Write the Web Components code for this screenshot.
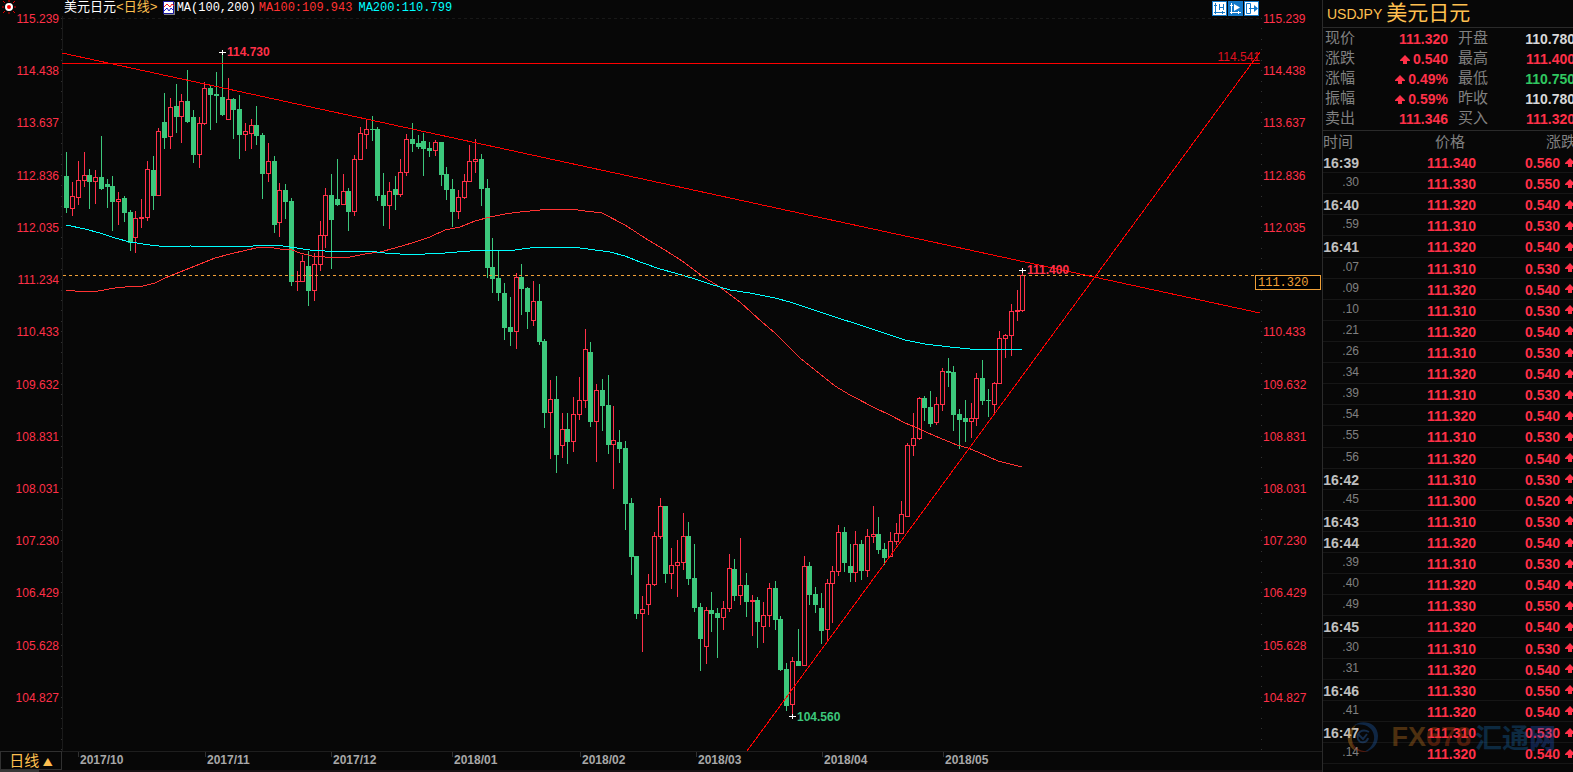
<!DOCTYPE html>
<html lang="zh-CN">
<head>
<meta charset="utf-8">
<title>USDJPY 美元日元</title>
<style>
  :root {
    --bg: #070707;
    --line: #1e1e1e;
    --up: #ff3048;
    --down: #3cc87c;
    --gold: #ffc050;
    --muted: #808080;
    --orange: #f0a038;
    --cjk: "Noto Sans CJK SC";
  }
  html, body {
    height: 100%;
    margin: 0;
    overflow: hidden;
    background: var(--bg);
  }
  body {
    font-family: "Liberation Sans", var(--cjk), sans-serif;
    font-size: 12px;
  }
</style>
</head>
<body>
<trading-screen>
  <chart-panel slot="chart"></chart-panel>
  <quote-header slot="side" code="USDJPY">美元日元</quote-header>
  <tick-list slot="side"></tick-list>
</trading-screen>

<script>
const MIN_LEFT = 62, MIN_TOP = 16, PLOT_W = 1198, PLOT_H = 735;

const PRICES = ['115.239', '114.438', '113.637', '112.836', '112.035', '111.234', '110.433',
  '109.632', '108.831', '108.031', '107.230', '106.429', '105.628', '104.827'];

// direction, high, body top, body bottom, low
const CANDLES = `
D 152 176 208 213|U 182 196 209 216|U 161 180 198 205|U 152 175 181 187|D 169 175 182 209
U 170 177 182 204|D 136 177 189 190|D 179 184 187 208|D 176 186 202 231|U 192 199 202 225
D 196 198 213 222|D 210 212 243 251|U 211 218 238 253|U 199 217 219 228|U 161 169 218 221
D 156 170 196 210|U 128 131 196 196|D 93 122 138 149|U 98 107 137 149|D 84 106 117 133
U 94 101 117 143|D 70 101 122 123|D 110 117 155 163|U 117 123 155 168|U 82 88 124 125
D 86 88 95 130|D 72 94 96 123|D 53 97 115 116|U 78 99 120 120|D 98 99 110 139
D 95 109 135 159|U 123 131 135 151|U 119 125 134 149|D 106 125 136 145|D 133 135 174 199
U 143 161 174 182|D 156 161 225 233|U 183 190 223 237|D 184 190 202 219|D 198 201 282 286
U 271 281 282 291|U 255 261 282 282|D 251 266 291 306|U 253 264 291 301|U 221 235 265 271
U 188 195 236 248|D 174 195 220 269|D 159 199 205 206|U 174 191 205 205|D 188 191 212 231
U 155 159 212 216|U 127 133 160 160|U 120 129 135 149|D 116 129 130 141|D 127 129 196 201
D 173 195 206 226|U 182 191 206 229|D 176 189 195 210|U 159 172 195 197|U 134 139 173 176
D 123 139 144 152|D 135 143 147 149|D 133 141 149 176|D 142 148 151 157|U 140 142 151 156
D 142 142 175 186|D 167 174 190 200|D 179 189 212 227|U 190 197 212 219|U 174 181 198 199
U 145 161 182 182|U 139 159 162 173|D 154 159 189 206|D 179 188 268 278|D 238 267 279 293
D 250 278 293 301|D 283 293 328 340|D 297 327 332 346|U 273 277 332 349|D 264 277 289 315
D 287 288 312 329|U 281 301 321 326|D 284 301 342 345|D 339 341 413 428|U 380 399 413 459
D 376 399 455 473|U 413 429 446 458|D 413 429 442 464|U 397 414 442 452|U 377 400 415 420
U 329 349 401 408|D 342 352 422 427|U 384 390 422 462|D 379 390 406 431|D 375 405 445 454
U 406 440 445 489|D 430 442 449 463|D 441 448 504 530|D 498 503 557 575|D 556 556 614 619
U 596 609 614 652|U 574 584 605 615|U 532 536 585 586|U 498 506 537 539|D 506 506 574 583
U 548 565 574 589|U 540 562 566 597|U 513 536 563 570|D 522 536 579 585|D 544 578 608 612
D 603 607 639 671|U 607 610 647 664|D 592 610 614 632|D 608 613 618 658|U 601 608 618 630
U 554 568 609 612|D 559 569 596 601|U 538 585 596 605|D 573 585 602 617|U 595 600 602 636
D 597 600 622 648|U 602 615 627 643|U 583 588 616 627|D 581 588 620 630|D 616 619 670 671
D 663 669 706 711|U 657 661 705 715|D 629 661 666 666|U 556 566 666 666|D 562 566 595 605
D 587 594 605 613|D 593 608 631 644|U 579 583 630 641|U 566 571 584 623|U 525 532 572 576
D 527 532 563 572|D 544 566 573 582|U 531 544 573 582|D 540 544 571 580|U 529 536 571 577
U 506 534 537 543|D 517 534 550 554|D 543 549 558 565|U 532 541 557 557|U 523 533 542 545
U 501 514 534 534|U 443 445 517 517|U 413 438 446 456|U 397 398 439 440|D 396 398 408 421
D 391 407 424 427|U 397 404 423 425|U 368 371 405 411|D 358 371 373 387|D 366 372 415 431
D 409 414 420 449|D 400 418 422 442|U 403 418 422 438|U 373 378 419 426|D 360 378 401 405
D 389 400 401 417|U 382 383 405 413|U 331 338 384 384|U 334 335 339 358|U 304 311 336 356
U 290 310 312 321|U 271 275 311 312`.trim().split(/[|\n]/).map(c => c.split(' '));

const MA100 = `66,290 75,291 90,292 98,291 115,288 125,287 143,286 155,283 165,278 175,274 190,268
  200,264 215,258 230,254 247,250 256,248 267,247 280,249 292,250 300,253 312,256 325,257 337,258
  350,257 365,254 380,252 395,248 412,243 430,237 445,230 460,227 475,221 490,217 505,214 520,212
  540,210 560,209 570,209 585,211 602,213 625,225 648,240 665,250 682,261 705,278 720,287 740,302
  762,322 775,333 785,343 800,358 815,370 835,386 850,395 875,408 890,415 905,423 915,427 935,436
  957,445 968,448 980,453 998,461 1010,464 1022,467`;
const MA200 = `66,225 85,229 100,233 115,238 130,242 150,245 167,247 190,246 245,247 262,245 275,245
  290,247 310,250 325,251 368,251 385,253 400,254 425,254 445,253 470,251 480,250 515,250 530,248
  548,247 562,247 580,248 595,250 610,252 625,256 640,262 660,269 675,273 695,279 710,284 730,290
  750,293 775,298 790,302 808,308 835,317 860,325 890,335 905,340 925,344 950,347 970,349 1022,349`;

const TICKS = `16:39 .340 .560|.30 .330 .550|16:40 .320 .540|.59 .310 .530|16:41 .320 .540|.07 .310 .530
.09 .320 .540|.10 .310 .530|.21 .320 .540|.26 .310 .530|.34 .320 .540|.39 .310 .530|.54 .320 .540
.55 .310 .530|.56 .320 .540|16:42 .310 .530|.45 .300 .520|16:43 .310 .530|16:44 .320 .540
.39 .310 .530|.40 .320 .540|.49 .330 .550|16:45 .320 .540|.30 .310 .530|.31 .320 .540
16:46 .330 .550|.41 .320 .540|16:47 .310 .530|.14 .320 .540`.split(/[|\n]/).map(t => t.split(' '));

class TradingScreen extends HTMLElement {
  constructor() {
    super();
    this.attachShadow({ mode: 'open' }).innerHTML = `
      <style>
        :host { display: flex; height: 100vh; background: var(--bg); }
        main { flex: 1; min-width: 0; display: flex; }
        aside {
          position: relative;
          flex: none;
          width: 250px;
          display: flex;
          flex-direction: column;
          border-left: 1px solid #2a2a2a;
          overflow: hidden;
        }
      </style>
      <main><slot name="chart"></slot></main>
      <aside>
        <slot name="side"></slot>
        <site-mark></site-mark>
      </aside>`;
  }
}

class PriceAxis extends HTMLElement {
  connectedCallback() {
    const skip = this.getAttribute('skip');
    this.attachShadow({ mode: 'open' }).innerHTML = `
      <style>
        :host {
          position: relative;
          display: flex;
          flex-direction: column;
          box-sizing: border-box;
          padding: 12px 3px 8px;
          color: var(--up);
          text-align: var(--axis-align, left);
        }
        .label { flex: 1; line-height: 14px; }
        .dots {
          position: absolute;
          top: 18px;
          bottom: 0;
          left: var(--dots-left, auto);
          right: var(--dots-right, auto);
          width: 1px;
          background: repeating-linear-gradient(#303030 0 1px, transparent 1px 1.425%);
        }
      </style>
      ${PRICES.map(p => `<span class="label">${p === skip ? '' : p}</span>`).join('')}
      <i class="dots"></i>
      <slot></slot>`;
  }
}
customElements.define('price-axis', PriceAxis);

class CandlePlot extends HTMLElement {
  constructor() {
    super();
    this.attachShadow({ mode: 'open' });
  }

  connectedCallback() {
    const candles = CANDLES.map(([dir, ...v], i) => {
      const [high, top, bottom, low] = v.map(Number);
      const x = Math.floor(66.75 + i * 5.76);
      const h = Math.max(bottom - top, 1);
      if (dir === 'D') {
        return `<path fill="#3cc87c" d="M${x} ${high}h1V${low}h-1zM${x - 2} ${top}h5v${h}h-5z"/>`;
      }
      const body = h < 3
        ? `<path fill="#ff3048" d="M${x - 2} ${top}h5v${h}h-5z"/>`
        : `<path fill="none" stroke="#ff3048" d="M${x - 1.5} ${top + 0.5}h4v${h - 1}h-4z"/>`;
      return `<path fill="#ff3048" d="M${x} ${high}h1V${top}h-1zM${x} ${bottom}h1V${low}h-1z"/>${body}`;
    }).join('');

    const cross = (x, y) => `<path fill="#fff" d="M${x - 3} ${y}h7v1h-7zM${x} ${y - 2}h1v5h-1z"/>`;
    const left = x => `left:${(x - MIN_LEFT) / PLOT_W * 100}%`;
    const top = y => `top:${(y - MIN_TOP) / PLOT_H * 100}%`;

    this.shadowRoot.innerHTML = `
      <style>
        :host { position: relative; display: block; min-height: 0; }
        svg { position: absolute; inset: 0; width: 100%; height: 100%; shape-rendering: crispEdges; }
        polyline, line { fill: none; stroke-width: 1; vector-effect: non-scaling-stroke; }
        .tag {
          position: absolute;
          line-height: 14px;
          margin-top: -7px;
          font-weight: bold;
          color: var(--up);
          white-space: nowrap;
        }
        .low { color: var(--down); }
        .level { right: 0; font-weight: normal; color: #e01020; }
      </style>
      <svg viewBox="${MIN_LEFT} ${MIN_TOP} ${PLOT_W} ${PLOT_H}" preserveAspectRatio="none">
        <line x1="62" y1="18.5" x2="1260" y2="18.5" stroke="#181818" stroke-dasharray="3 3"/>
        <line x1="62.5" y1="16" x2="62.5" y2="751" stroke="#1a1a1a"/>
        ${candles}
        <polyline points="${MA100}" stroke="#ff3232"/>
        <polyline points="${MA200}" stroke="#00ffff"/>
        <line x1="63" y1="275.5" x2="1255" y2="275.5" stroke="#f0a038" stroke-dasharray="3 3"/>
        <line x1="62" y1="63.5" x2="1260" y2="63.5" stroke="#ff0000"/>
        <line x1="62" y1="53" x2="1260" y2="313" stroke="#ff0000"/>
        <line x1="747" y1="751" x2="1260" y2="52" stroke="#ff0000"/>
        ${cross(222, 52)}${cross(1022, 270)}${cross(792, 716)}
      </svg>
      <span class="tag" style="${left(227)};${top(52)}">114.730</span>
      <span class="tag" style="${left(1027)};${top(270)}">111.400</span>
      <span class="tag low" style="${left(797)};${top(717)}">104.560</span>
      <span class="tag level" style="${top(57)}">114.541</span>`;
  }
}
customElements.define('candle-plot', CandlePlot);

class ChartToolbar extends HTMLElement {
  constructor() {
    super();
    this.attachShadow({ mode: 'open' }).innerHTML = `
      <style>
        :host {
          display: flex;
          align-items: center;
          height: 16px;
          padding-left: 2px;
          white-space: nowrap;
          font-family: "Liberation Mono", var(--cjk), monospace;
          line-height: 16px;
          color: #fff;
        }
        .name { font-size: 13px; margin-right: 5px; }
        .name b { font-weight: normal; color: var(--gold); }
        .ma { margin-left: 2px; }
        .ma100 { margin-left: 3px; color: #ff3232; }
        .ma200 { margin-left: 6px; color: #00ffff; }
        nav { display: flex; margin-left: auto; }
        button {
          display: block;
          width: 16px;
          height: 15px;
          padding: 0;
          border: 0;
          background: none;
        }
        svg { display: block; }
      </style>
      <span class="name">美元日元<b>&lt;日线&gt;</b></span>
      <svg width="12" height="14" viewBox="0 0 12 14">
        <path fill="#808080" d="M1 1h11v13H1z"/><path fill="#fff" stroke="#1818a0" d="M.5.5h10v12H.5z"/>
        <path fill="none" stroke="#ff2020" d="M1 6l3-3 3 3 2-3 2 2"/>
        <path fill="none" stroke="#2020d0" d="M1 10l3-3 2 3 2-3 3 3"/>
      </svg>
      <span class="ma">MA(100,200)</span>
      <span class="ma100">MA100:109.943</span>
      <span class="ma200">MA200:110.799</span>
      <nav>
        <button aria-label="坐标"><svg width="15" height="15" shape-rendering="crispEdges">
          <path fill="#1278c8" d="M0 0h15v15H0z"/><path fill="#fff" d="M1 1h13v13H1z"/>
          <path fill="none" stroke="#1278c8" d="M3.5 2v11M2 11.5h11M7.5 3v6M11.5 3v6M7.5 6.5h4M2 4.5h3M10.5 10v3"/>
        </svg></button>
        <button aria-label="回放"><svg width="15" height="15">
          <path fill="#1278c8" d="M0 0h15v15H0z"/>
          <path fill="none" stroke="#fff" d="M3.5 2v11M2 11.5h11M2 4.5h3M10.5 10v3"/>
          <path fill="#fff" d="M6 3l6 3.500L6 10z"/>
        </svg></button>
        <button aria-label="移到最新"><svg width="15" height="15">
          <path fill="#1278c8" d="M0 0h15v15H0z"/><path fill="#fff" d="M1 1h13v13H1z"/>
          <path fill="none" stroke="#1278c8" d="M2.500 2.500h4v10h-4z"/>
          <path fill="#1278c8" d="M5 7h5V4l4 3.500-4 3.500V8H5z"/>
        </svg></button>
      </nav>`;
  }
}
customElements.define('chart-toolbar', ChartToolbar);

class DateAxis extends HTMLElement {
  constructor() {
    super();
    this.attachShadow({ mode: 'open' }).innerHTML = `
      <style>
        :host {
          display: grid;
          grid-template-columns: 16fr 127fr 126fr 121fr 128fr 116fr 126fr 121fr 379fr;
          border-top: 1px solid var(--line);
          font-weight: bold;
          line-height: 16px;
          color: #a8a8a8;
        }
        time {
          height: 5px;
          padding-left: 1px;
          border-left: 1px solid #303030;
          white-space: nowrap;
        }
      </style>
      <span></span>
      ${['2017/10', '2017/11', '2017/12', '2018/01', '2018/02', '2018/03', '2018/04', '2018/05']
        .map(d => `<time>${d}</time>`).join('')}`;
  }
}
customElements.define('date-axis', DateAxis);

class ChartPanel extends HTMLElement {
  constructor() {
    super();
    this.attachShadow({ mode: 'open' }).innerHTML = `
      <style>
        :host {
          flex: 1;
          min-width: 0;
          display: grid;
          grid-template-columns: 62px 1fr 62px;
          grid-template-rows: 16px 1fr 19px 2px;
        }
        price-axis { grid-row: 1 / 3; }
        .left { --axis-align: right; --dots-right: 0; grid-column: 1; }
        .right { --dots-left: 1px; grid-column: 3; }
        chart-toolbar, candle-plot { grid-column: 2; }
        chart-toolbar { grid-row: 1; }
        candle-plot { grid-row: 2; }
        date-axis { grid-column: 2 / 4; }
        .sun { position: absolute; left: 2px; top: 0; }
        .last {
          position: absolute;
          left: -5px;
          right: 1px;
          top: 275px;
          height: 13px;
          padding-left: 2px;
          border: 1px solid var(--orange);
          background: #000;
          font-family: "Liberation Mono", monospace;
          line-height: 15px;
          text-align: left;
          color: var(--orange);
        }
        button {
          padding: 0;
          border: 1px solid #303030;
          background: none;
          font: 15px/16px var(--cjk), sans-serif;
          color: var(--gold);
        }
        button small { font-size: 10px; }
        .scroll { grid-column: 1 / 4; background: linear-gradient(90deg, #383838 39px, #181214 0); }
      </style>
      <price-axis class="left">
        <svg class="sun" width="14" height="14" viewBox="0 0 14 14">
          <circle cx="7" cy="7" r="3" fill="#f00" stroke="#fff" stroke-width="2"/>
          <path stroke="#e00000" d="M7 0v2M7 12v2M0 7h2M12 7h2M1 1l2 2M11 11l2 2M13 1l-2 2M1 13l2-2"/>
        </svg>
      </price-axis>
      <chart-toolbar></chart-toolbar>
      <candle-plot></candle-plot>
      <price-axis class="right" skip="111.234"><span class="last">111.320</span></price-axis>
      <button>日线 <small>▲</small></button>
      <date-axis></date-axis>
      <div class="scroll"></div>`;
  }
}
customElements.define('chart-panel', ChartPanel);

class UpArrow extends HTMLElement {
  constructor() {
    super();
    this.attachShadow({ mode: 'open' }).innerHTML = `
      <style>:host { display: inline-block; width: 10px; height: 9px; } svg { display: block; }</style>
      <svg width="10" height="9"><path fill="#ff3048" d="M5 0l5 5v1H7v3H3V6H0V5z"/></svg>`;
  }
}
customElements.define('up-arrow', UpArrow);

class QuoteHeader extends HTMLElement {
  connectedCallback() {
    const rows = [
      ['现价', '111.320', '', '开盘', '110.780', 'flat'],
      ['涨跌', '0.540', '<up-arrow></up-arrow>', '最高', '111.400', 'up'],
      ['涨幅', '0.49%', '<up-arrow></up-arrow>', '最低', '110.750', 'down'],
      ['振幅', '0.59%', '<up-arrow></up-arrow>', '昨收', '110.780', 'flat'],
      ['卖出', '111.346', '', '买入', '111.320', 'up'],
    ];
    this.attachShadow({ mode: 'open' }).innerHTML = `
      <style>
        :host { display: block; border-bottom: 1px solid #2a2a2a; }
        h1 {
          display: flex;
          align-items: center;
          gap: 4px;
          height: 27px;
          margin: 0;
          padding-left: 4px;
          border-bottom: 1px solid #2a2a2a;
          font-size: 14px;
          font-weight: normal;
          color: var(--gold);
        }
        h1 span { font-size: 21px; line-height: 25px; padding-bottom: 2px; }
        dl {
          display: grid;
          grid-template-columns: 40px 83px 40px 87px;
          grid-auto-rows: 20px;
          margin: 0;
          padding: 0 0 2px 2px;
        }
        dt { font-size: 15px; line-height: 20px; color: var(--muted); white-space: nowrap; }
        dt.second { margin-left: 10px; }
        dd {
          margin: 0;
          font-size: 14px;
          font-weight: bold;
          line-height: 23px;
          text-align: right;
          white-space: nowrap;
          color: var(--up);
        }
        .flat { color: #d8d8d8; }
        .down { color: #30c860; }
        up-arrow { margin-right: 3px; }
      </style>
      <h1>${this.getAttribute('code')} <span><slot></slot></span></h1>
      <dl>
        ${rows.map(([a, v, arrow, b, w, tone]) => `
          <dt>${a}</dt><dd>${arrow}${v}</dd>
          <dt class="second">${b}</dt><dd class="${tone}">${w}</dd>`).join('')}
      </dl>`;
  }
}
customElements.define('quote-header', QuoteHeader);

class TickList extends HTMLElement {
  constructor() {
    super();
    this.attachShadow({ mode: 'open' }).innerHTML = `
      <style>
        :host {
          flex: 1;
          min-height: 0;
          display: flex;
          flex-direction: column;
          margin-bottom: 8px;
        }
        table {
          flex: 1;
          display: flex;
          flex-direction: column;
          white-space: nowrap;
        }
        tbody { flex: 1; display: flex; flex-direction: column; }
        tr {
          display: grid;
          grid-template-columns: 36px 117px 84px 15px;
          align-items: center;
        }
        thead tr { height: 21px; }
        tbody tr { flex: 1; border-bottom: 1px solid #161616; }
        th, td { padding: 0; }
        th {
          font-size: 15px;
          font-weight: normal;
          line-height: 20px;
          text-align: left;
          color: var(--muted);
        }
        th:nth-child(2) { padding-left: 76px; }
        th:nth-child(3) { padding-left: 70px; }
        td {
          font-size: 14px;
          font-weight: bold;
          line-height: 18px;
          padding-top: 2px;
          text-align: right;
          color: var(--up);
        }
        td.minute { color: #c0c0c0; }
        td.second {
          padding: 0 0 2px;
          font-size: 12px;
          font-weight: normal;
          line-height: 16px;
          color: var(--muted);
        }
        td:last-child { padding: 0 0 0 5px; line-height: 0; text-align: left; }
      </style>
      <table>
        <thead><tr><th>时间</th><th>价格</th><th colspan="2">涨跌</th></tr></thead>
        <tbody>
          ${TICKS.map(([t, p, c]) => `
            <tr><td class="${t[0] === '.' ? 'second' : 'minute'}">${t}</td>
            <td>111${p}</td><td>0${c}</td><td><up-arrow></up-arrow></td></tr>`).join('')}
        </tbody>
      </table>`;
  }
}
customElements.define('tick-list', TickList);

class SiteMark extends HTMLElement {
  constructor() {
    super();
    this.attachShadow({ mode: 'open' }).innerHTML = `
      <style>
        :host {
          position: absolute;
          right: 17px;
          bottom: 17px;
          display: flex;
          align-items: center;
          height: 36px;
          white-space: nowrap;
          font-weight: bold;
          opacity: 0.36;
          pointer-events: none;
        }
        svg { margin-right: 12px; }
        .fx { font: bold 27px/36px "Liberation Sans Narrow", "Liberation Sans", sans-serif; color: #c87820; }
        .fx b { color: #c84010; }
        .cn { margin-left: 4px; font: bold 27px/36px var(--cjk), sans-serif; color: #1868a8; }
        .cn b { color: #2050b8; }
      </style>
      <svg width="32" height="32" viewBox="0 0 32 32" fill="none" stroke-width="2">
        <path fill="#2060b0" d="M6 5C13-2 31 0 31 15c0 9-6 15-14 16 6-3 11-9 10-16C26 6 16 1 6 5z"/>
        <path fill="#e09020" d="M9 4C-2 9-2 25 9 30 4 23 3 12 9 4z"/>
        <path fill="#d84020" d="M5 19c1 8 9 12 17 11-8 3-18-1-17-11z"/>
        <path stroke="#3070c0" d="M22 11c-7-4-13 1-11 7 2 5 9 4 10-1M11 13l5 5 4-5"/>
      </svg>
      <span class="fx">FX<b>678</b></span><span class="cn">汇通<b>网</b></span>`;
  }
}
customElements.define('site-mark', SiteMark);
customElements.define('trading-screen', TradingScreen);
</script>
</body>
</html>
